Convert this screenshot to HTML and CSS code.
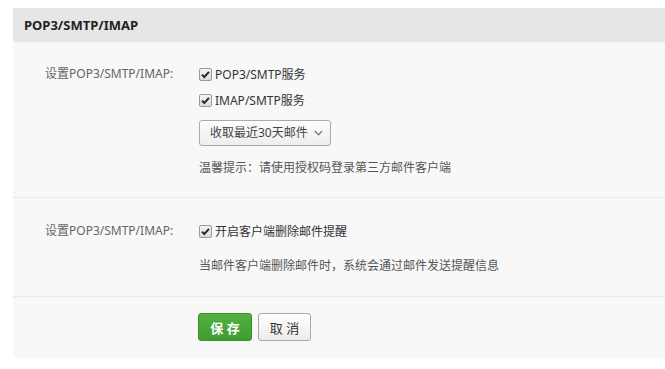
FILE: index.html
```html
<!DOCTYPE html>
<html lang="zh-CN">
<head>
<meta charset="utf-8">
<title>POP3/SMTP/IMAP</title>
<link rel="stylesheet" href="styles.css">
</head>
<body>
<div class="panel">
  <div class="panel-head">POP3/SMTP/IMAP</div>
  <div class="section">
    <div class="label">设置POP3/SMTP/IMAP:</div>
    <div class="controls">
      <label class="check-row"><span class="cb"><svg viewBox="0 0 13 13" width="13" height="13"><path d="M3 6.6 L5.3 9 L10 3.8" fill="none" stroke="#2b2b2b" stroke-width="2"/></svg></span>POP3/SMTP服务</label>
      <label class="check-row"><span class="cb"><svg viewBox="0 0 13 13" width="13" height="13"><path d="M3 6.6 L5.3 9 L10 3.8" fill="none" stroke="#2b2b2b" stroke-width="2"/></svg></span>IMAP/SMTP服务</label>
      <div class="select">收取最近30天邮件<svg class="chev" viewBox="0 0 10 6" width="9" height="6"><path d="M1 1 L5 5 L9 1" fill="none" stroke="#555" stroke-width="1.2"/></svg></div>
      <div class="note">温馨提示：请使用授权码登录第三方邮件客户端</div>
    </div>
  </div>
  <div class="section section-2">
    <div class="label">设置POP3/SMTP/IMAP:</div>
    <div class="controls">
      <label class="check-row"><span class="cb"><svg viewBox="0 0 13 13" width="13" height="13"><path d="M3 6.6 L5.3 9 L10 3.8" fill="none" stroke="#2b2b2b" stroke-width="2"/></svg></span>开启客户端删除邮件提醒</label>
      <div class="note">当邮件客户端删除邮件时，系统会通过邮件发送提醒信息</div>
    </div>
  </div>
  <div class="footer">
    <button class="btn btn-save">保 存</button>
    <button class="btn btn-cancel">取 消</button>
  </div>
</div>
</body>
</html>
```
FILE: styles.css
```css
html, body {
  background: #fff;
}
body {
  margin: 8px 0 0 13px;
  font-family: "Noto Sans", "Noto Sans CJK SC", sans-serif;
  font-size: 12px;
  color: #333;
}
.panel {
  background: #f8f8f8;
  width: 652px;
}
.panel-head {
  background: #e6e6e6;
  height: 34px;
  line-height: 34px;
  padding-left: 11px;
  font-weight: bold;
  color: #222;
  font-size: 13px;
}
.section {
  display: flex;
  padding: 19px 0 19px 32px;
  border-bottom: 1px solid #e8e8e8;
}
.section-2 {
  padding-top: 20px;
  padding-bottom: 20px;
}
.label {
  width: 154px;
  line-height: 26px;
  height: 26px;
  color: #666;
}
.controls {
  display: flex;
  flex-direction: column;
  align-items: flex-start;
}
.check-row {
  display: flex;
  align-items: center;
  height: 26px;
  color: #333;
}
.cb {
  width: 11px;
  height: 11px;
  border: 1px solid #9a9a9a;
  border-radius: 2px;
  background: linear-gradient(#f4f4f4, #dcdcdc);
  margin-right: 3px;
  position: relative;
  display: inline-block;
}
.cb svg {
  position: absolute;
  left: -1px;
  top: -1px;
}
.select {
  margin-top: 7px;
  height: 24px;
  line-height: 24px;
  border: 1px solid #aaa;
  border-radius: 3px;
  background: linear-gradient(#fdfdfd, #ededed);
  color: #444;
  padding-left: 10px;
  width: 120px;
  display: flex;
  align-items: center;
}
.chev {
  margin-left: 6px;
}
.note {
  margin-top: 12px;
  line-height: 20px;
  color: #555;
}
.footer {
  padding: 16px 0 17px 185px;
  display: flex;
  gap: 6px;
}
.btn {
  height: 28px;
  font-family: "Noto Sans", "Noto Sans CJK SC", sans-serif;
  font-size: 13px;
  border-radius: 3px;
  padding: 0;
  cursor: pointer;
}
.btn-save {
  width: 54px;
  background: linear-gradient(#52b141, #3e9d2d);
  border: 1px solid #3a902b;
  color: #fff;
  font-weight: bold;
}
.btn-cancel {
  width: 53px;
  background: linear-gradient(#ffffff, #ececec);
  border: 1px solid #a8a8a8;
  color: #333;
}
```
